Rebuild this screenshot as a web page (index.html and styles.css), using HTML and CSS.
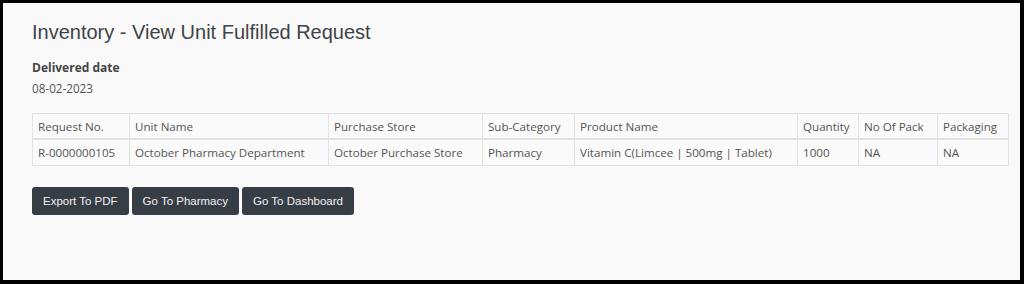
FILE: index.html
```html
<!DOCTYPE html>
<html lang="en">
<head>
    <meta charset="UTF-8">
    <meta name="viewport" content="width=device-width, initial-scale=1.0">
    <title>Inventory - View Unit Fulfilled Request</title>
    <link rel="stylesheet" href="styles.css">
</head>
<body>
    <div class="frame">
        <div class="page">
            <h1 class="title">Inventory - View Unit Fulfilled Request</h1>

            <div class="field">
                <label>Delivered date</label>
                <p>08-02-2023</p>
            </div>

            <table class="request-table">
                <colgroup>
                    <col style="width: 97px">
                    <col style="width: 199px">
                    <col style="width: 154px">
                    <col style="width: 92px">
                    <col style="width: 223px">
                    <col style="width: 61px">
                    <col style="width: 79px">
                    <col>
                </colgroup>
                <thead>
                    <tr>
                        <th>Request No.</th>
                        <th>Unit Name</th>
                        <th>Purchase Store</th>
                        <th>Sub-Category</th>
                        <th>Product Name</th>
                        <th>Quantity</th>
                        <th>No Of Pack</th>
                        <th>Packaging</th>
                    </tr>
                </thead>
                <tbody>
                    <tr>
                        <td>R-0000000105</td>
                        <td>October Pharmacy Department</td>
                        <td>October Purchase Store</td>
                        <td>Pharmacy</td>
                        <td>Vitamin C(Limcee | 500mg | Tablet)</td>
                        <td>1000</td>
                        <td>NA</td>
                        <td>NA</td>
                    </tr>
                </tbody>
            </table>

            <div class="actions">
                <button>Export To PDF</button>
                <button>Go To Pharmacy</button>
                <button>Go To Dashboard</button>
            </div>
        </div>
    </div>
</body>
</html>
```

FILE: styles.css
```css
html, body {
    margin: 0;
    padding: 0;
    background-color: #000;
}

.frame {
    width: 1024px;
    height: 284px;
    box-sizing: border-box;
    border-style: solid;
    border-color: #000;
    border-width: 3px 4px 4px 3px;
}

.page {
    height: 100%;
    box-sizing: border-box;
    background-color: #f9f9f9;
    padding: 17px 11px 0 29px;
    font-family: "Open Sans", sans-serif;
    color: #555;
}

.title {
    margin: 0 0 15px;
    font-family: "Liberation Sans", Arial, sans-serif;
    font-weight: normal;
    font-size: 20px;
    line-height: 24px;
    color: #3f4448;
}

.field label {
    display: block;
    font-weight: bold;
    font-size: 12px;
    line-height: 17px;
    color: #444;
}

.field p {
    margin: 4px 0 0;
    font-size: 11.7px;
    line-height: 17px;
}

.request-table {
    margin-top: 16px;
    width: 977px;
    border-collapse: collapse;
    table-layout: fixed;
    font-size: 11.6px;
    background-color: #fafafa;
}

.request-table th,
.request-table td {
    border: 1px solid #e2e2e2;
    padding: 0 5px;
    height: 25px;
    text-align: left;
    font-weight: normal;
    white-space: nowrap;
    overflow: hidden;
}

.request-table th {
    height: 24px;
    border-bottom: 2px solid #e2e2e2;
}

.actions {
    display: flex;
    gap: 3px;
    margin-top: 21px;
}

.actions button {
    font-family: "Liberation Sans", Arial, sans-serif;
    font-size: 11.5px;
    color: #f1f1f1;
    background-color: #373d45;
    border: none;
    border-radius: 3px;
    height: 28px;
    padding: 0 11px;
    cursor: pointer;
}
```
